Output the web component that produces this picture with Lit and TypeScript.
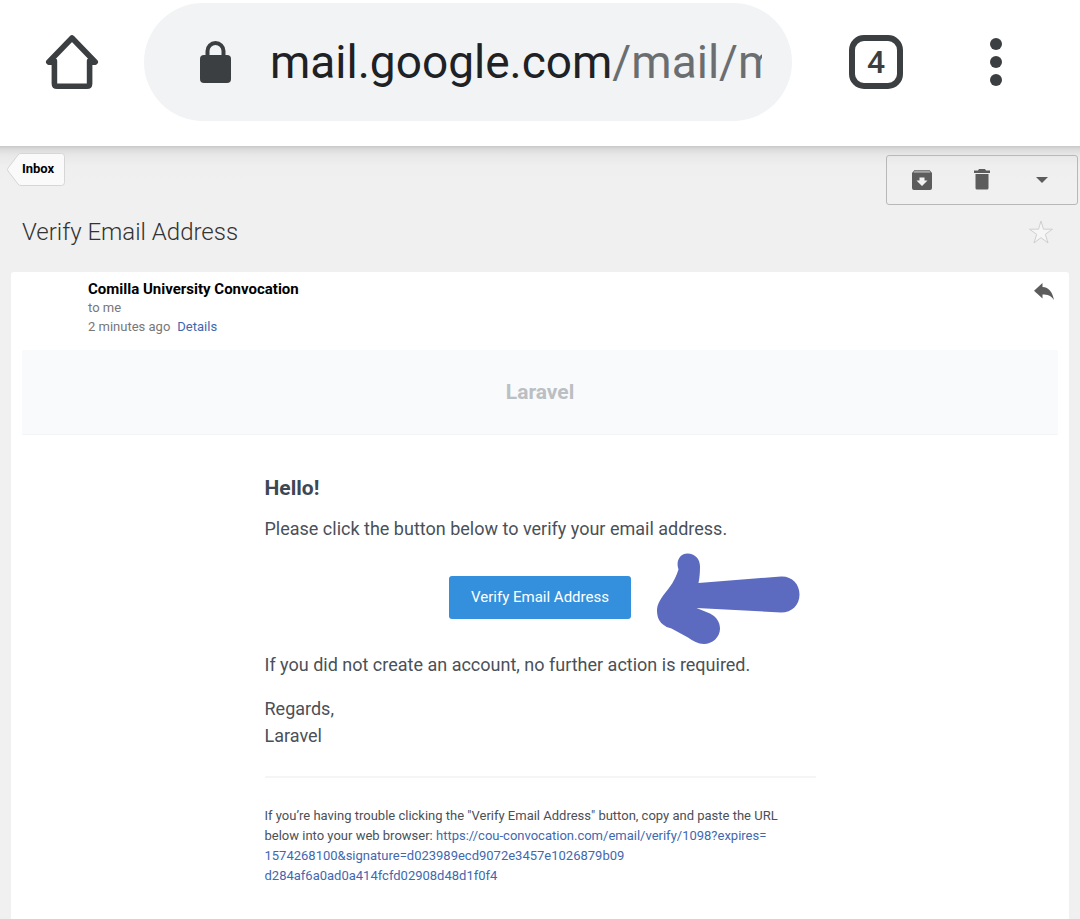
import { LitElement, html, css } from "lit";
import { customElement, property } from "lit/decorators.js";

@customElement("browser-bar")
export class BrowserBar extends LitElement {
  @property() host = "";
  @property() path = "";
  @property({ type: Number }) tabs = 1;

  static styles = css`
    :host {
      display: block;
      background: #fff;
    }
    .bar {
      display: grid;
      grid-template-columns: 144px minmax(0, 1fr) 168px 72px 48px;
      align-items: center;
      padding: 3px 0 25px;
    }
    button {
      font: inherit;
      color: #3c3f41;
      background: none;
      border: 0;
      padding: 0;
      display: flex;
      align-items: center;
      justify-content: center;
    }
    .address {
      justify-content: flex-start;
      gap: 37px;
      height: 118px;
      padding: 0 30px 0 54px;
      border-radius: 60px;
      background: #f1f3f4;
      font-size: 46px;
      line-height: 60px;
      text-align: left;
    }
    .address svg {
      flex: none;
    }
    .url {
      flex: 1;
      min-width: 0;
      overflow: hidden;
      white-space: nowrap;
      color: #202124;
    }
    .path {
      color: #6b6e71;
    }
    .count {
      box-sizing: border-box;
      width: 54px;
      height: 54px;
      border: 6px solid #3c3f41;
      border-radius: 15px;
      margin: 0 auto;
      font-size: 32px;
      font-weight: 500;
      line-height: 42px;
    }
  `;

  render() {
    return html`
      <header class="bar">
        <button aria-label="Home">
          <svg width="56" height="58" viewBox="0 0 56 58" fill="none" stroke="#3c3f41" stroke-width="5.6" stroke-linecap="round" stroke-linejoin="round">
            <path d="M10.400 28V50.500Q10.400 53.200 13 53.200H43Q45.600 53.200 45.600 50.500V28" />
            <path d="M4.800 29 28 5 51.200 29M5.500 29.200H10M46 29.200H50.500" />
          </svg>
        </button>
        <button class="address" aria-label="Address">
          <svg width="35" height="44" viewBox="0 0 35 44">
            <rect x="2" y="15" width="31" height="28" rx="4" fill="#3c3f41" />
            <path d="M9.500 17V11a8 8 0 0 1 16 0v6" fill="none" stroke="#3c3f41" stroke-width="4" />
          </svg>
          <span class="url">${this.host}<span class="path">${this.path}</span></span>
        </button>
        <button class="count" aria-label="Open tabs">${this.tabs}</button>
        <button aria-label="Menu">
          <svg width="12" height="50" viewBox="0 0 12 50" fill="#3c3f41">
            <circle cx="6" cy="7" r="6" />
            <circle cx="6" cy="25" r="6" />
            <circle cx="6" cy="43" r="6" />
          </svg>
        </button>
      </header>
    `;
  }
}

@customElement("mail-toolbar")
export class MailToolbar extends LitElement {
  static styles = css`
    :host {
      display: block;
    }
    .bar {
      display: flex;
      justify-content: space-between;
      align-items: flex-start;
      padding: 7px 2px 0 7px;
    }
    button {
      font: inherit;
      color: #000;
      background: none;
      border: 0;
      padding: 0;
    }
    .back {
      display: grid;
      width: 58px;
      height: 33px;
    }
    .back > * {
      grid-area: 1 / 1;
    }
    .back .label {
      font-size: 13px;
      font-weight: 700;
      line-height: 32px;
      padding-left: 4px;
    }
    .actions {
      box-sizing: border-box;
      display: grid;
      grid-template-columns: 70px 50px 70px;
      height: 50px;
      margin-top: 2px;
      border: 1px solid #b8b8b8;
      border-radius: 3px;
    }
    .actions button {
      display: grid;
      place-items: center;
    }
  `;

  render() {
    return html`
      <nav class="bar">
        <button class="back">
          <svg width="58" height="33" viewBox="0 0 58 33">
            <path d="M14 .5H54.500Q57.500 .5 57.500 3.500V29.500Q57.500 32.500 54.500 32.500H14Q12 32.500 11 31L1 18Q0 16.500 1 15L11 2Q12 .5 14 .5Z" fill="#fafafa" stroke="#d6d6d6" />
          </svg>
          <span class="label">Inbox</span>
        </button>
        <div class="actions">
          <button aria-label="Archive">
            <svg width="20" height="22" viewBox="0 0 20 22">
              <path d="M2.500 1H17.500L20 4V19Q20 21 18 21H2Q0 21 0 19V4Z" fill="#5c5c5c" />
              <path d="M2.500 1.500H17.500L18.500 3.800H1.500Z" fill="#a4a4a4" />
              <path d="M7.500 8.500h5v3H15.500L10 17 4.500 11.500H7.500Z" fill="#f2f2f2" />
            </svg>
          </button>
          <button aria-label="Delete">
            <svg width="16" height="22" viewBox="0 0 16 22" fill="#5c5c5c">
              <path d="M5 0H11L12 1.500H16V4H0V1.500H4Z" />
              <path d="M1.500 5H14.500V19Q14.500 20.500 13 20.500H3Q1.500 20.500 1.500 19Z" />
            </svg>
          </button>
          <button aria-label="More actions">
            <svg width="12" height="6" viewBox="0 0 12 6"><path d="M0 0H12L6 6Z" fill="#5c5c5c" /></svg>
          </button>
        </div>
      </nav>
    `;
  }
}

@customElement("mail-message")
export class MailMessage extends LitElement {
  static styles = css`
    :host {
      display: flex;
      flex-direction: column;
      flex: 1;
      margin: 0 11px;
      background: #fff;
      border-radius: 3px 3px 0 0;
    }
    a {
      color: #3f68b0;
      text-decoration: none;
    }
    button {
      font: inherit;
      background: none;
      border: 0;
      padding: 0;
    }
    .meta {
      display: flex;
      justify-content: space-between;
      align-items: flex-start;
      padding: 9px 15px 14px 77px;
      font-size: 13px;
      line-height: 19px;
      color: #777;
    }
    .sender {
      margin: 0;
      font-size: 15px;
      font-weight: 700;
      line-height: 17px;
      color: #000;
    }
    .when {
      display: flex;
      gap: 7px;
    }
    .reply {
      display: flex;
      margin-top: 2px;
    }
    .brand {
      box-sizing: border-box;
      margin: 0 11px;
      border-bottom: 1px solid #f3f5f7;
      background: #f8fafc;
      color: #bbbfc3;
      text-align: center;
      font-size: 21px;
      font-weight: 700;
      line-height: 84px;
    }
    .body {
      box-sizing: border-box;
      width: 100%;
      max-width: 551px;
      margin: 0 auto;
      padding: 40px 0 32px;
      color: #4a5058;
      font-size: 18px;
      line-height: 27px;
    }
    .greeting {
      margin: 0 0 13px;
      font-size: 21px;
      line-height: 27px;
      color: #3d4852;
    }
    p {
      margin: 0;
    }
    .action {
      position: relative;
      display: flex;
      justify-content: center;
      margin: 34px 0 32px;
    }
    .verify {
      height: 43px;
      padding: 0 22px;
      border-radius: 3px;
      background: #3490dc;
      color: #fff;
      font-size: 15px;
    }
    .arrow {
      position: absolute;
      left: 392px;
      top: -23px;
    }
    .regards {
      margin-top: 17px;
    }
    .help {
      margin-top: 27px;
      padding-top: 28px;
      border-top: 2px solid #f4f5f7;
      font-size: 13px;
      line-height: 20px;
    }
  `;

  render() {
    return html`
      <section class="meta">
        <div>
          <h2 class="sender">Comilla University Convocation</h2>
          <div>to me</div>
          <div class="when"><span>2 minutes ago</span><a href="#details">Details</a></div>
        </div>
        <button class="reply" aria-label="Reply">
          <svg width="20" height="18" viewBox="0 0 20 18">
            <path d="M8.500 0V4C15 4.500 18.500 9 20 17C17 12.500 13.500 11.500 8.500 11.500V15.500L0 7.800Z" fill="#5c5c5c" />
          </svg>
        </button>
      </section>
      <div class="brand">Laravel</div>
      <article class="body">
        <h2 class="greeting">Hello!</h2>
        <p>Please click the button below to verify your email address.</p>
        <div class="action">
          <button class="verify">Verify Email Address</button>
          <svg class="arrow" width="144" height="92" viewBox="0 0 144 92" aria-hidden="true">
            <path d="M30.500 .5C38 .5 43 6 43 13.500C43 20 42.500 25 41.500 30L124 23.500C135 23 142.500 31 142.500 41.500C142.500 52 135 59.500 124 59.500L39.500 55L53 60.500C60 64 63 70 63 75.500C63 84.500 55 91 47 91C41 91 36 88 31 84.500L14.500 75.500Q9 74.500 6 71.500C1 67.500 0 62.500 0 56.500C.5 48.500 7 41.500 12 35C17 28.500 19.500 22.500 21.500 16.500C18.500 8 23 .5 30.500 .5Z" fill="#5c6bc0" />
          </svg>
        </div>
        <p>If you did not create an account, no further action is required.</p>
        <p class="regards">Regards,<br />Laravel</p>
        <p class="help">
          If you’re having trouble clicking the "Verify Email Address" button, copy and paste the URL<br />
          below into your web browser:
          <a href="#verify">https://cou-convocation.com/email/verify/1098?expires=<br />1574268100&amp;signature=d023989ecd9072e3457e1026879b09<br />d284af6a0ad0a414fcfd02908d48d1f0f4</a>
        </p>
      </article>
    `;
  }
}

@customElement("app-root")
export class AppRoot extends LitElement {
  static styles = css`
    :host {
      display: flex;
      flex-direction: column;
      min-height: 100vh;
      background: #f0f0f0;
      font-family: Roboto, "Liberation Sans", sans-serif;
    }
    .page {
      display: flex;
      flex-direction: column;
      flex: 1;
      background: linear-gradient(#c9c9c9 0, #dadada 3px, #e8e8e8 9px, #efefef 20px, #f0f0f0 40px);
    }
    .subject {
      display: flex;
      justify-content: space-between;
      align-items: center;
      padding: 12px 27px 25px 22px;
    }
    h1 {
      margin: 0;
      font-size: 24px;
      font-weight: 300;
      line-height: 30px;
      color: #333;
    }
    .star {
      display: flex;
      padding: 0;
      border: 0;
      background: none;
    }
  `;

  render() {
    return html`
      <browser-bar host="mail.google.com" path="/mail/m" tabs="4"></browser-bar>
      <main class="page">
        <mail-toolbar></mail-toolbar>
        <div class="subject">
          <h1>Verify Email Address</h1>
          <button class="star" aria-label="Star">
            <svg width="24" height="24" viewBox="0 0 24 24" fill="#f6f6f6" stroke="#cfcfcf">
              <path d="M12 1 14.500 9.200H23.500L16.300 14.300 19 23 12 17.600 5 23 7.700 14.300 .5 9.200H9.500Z" />
            </svg>
          </button>
        </div>
        <mail-message></mail-message>
      </main>
    `;
  }
}
